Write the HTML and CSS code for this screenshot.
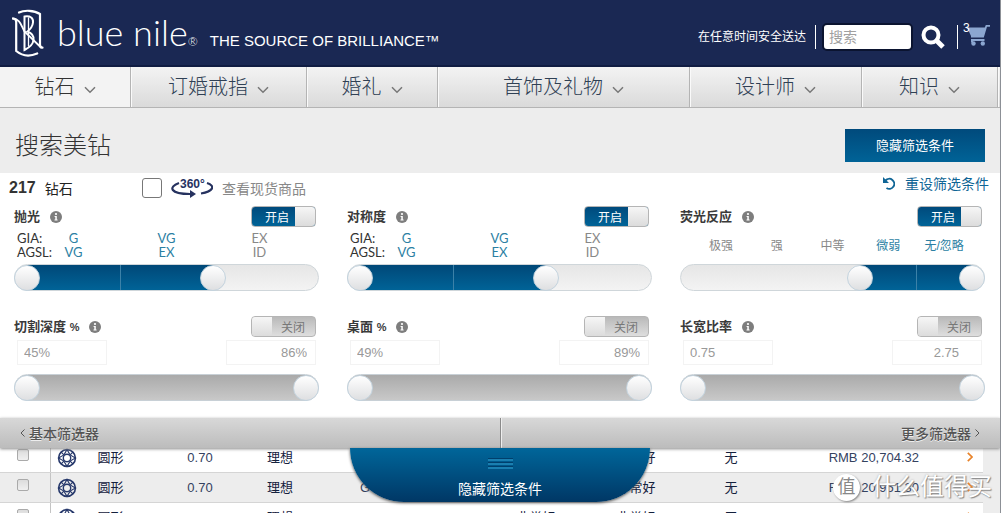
FILE: index.html
```html
<!DOCTYPE html>
<html lang="zh-CN">
<head>
<meta charset="utf-8">
<title>搜索美钻 - Blue Nile</title>
<link rel="stylesheet" href="styles.css">
</head>
<body>
<svg class="defs" aria-hidden="true">
  <symbol id="chev" viewBox="0 0 12 8"><path d="M1 1.2 6 6.2 11 1.2" fill="none" stroke="currentColor" stroke-width="1.5"/></symbol>
  <symbol id="info" viewBox="0 0 12 12"><circle cx="6" cy="6" r="6" fill="#7d7d7d"/><circle cx="6" cy="3" r="1.1" fill="#fff"/><path d="M4.6 5h2.2v3.6h.8v1H4.5v-1h.8V6h-.7z" fill="#fff"/></symbol>
  <symbol id="gem" viewBox="0 0 20 20"><g fill="none" stroke="#26386b" stroke-width="1.100"><circle cx="10" cy="10" r="8.400" stroke-width="1.600"/><circle cx="10" cy="10" r="3.700" stroke-width="1.400"/><path d="M10 1.600 6.900 6.900 1.600 10l5.300 3.100L10 18.400l3.100-5.300L18.400 10l-5.300-3.100z"/><path d="M4 4l2.900 2.900M16 4l-2.900 2.900M4 16l2.900-2.900M16 16l-2.900-2.900"/></g></symbol>
</svg>
<div class="page">
  <header class="header">
    <a class="brand" href="#">
      <svg class="brand-mark" viewBox="0 0 32 48" aria-hidden="true">
        <g fill="none" stroke="#fff" stroke-linecap="round">
          <path d="M7 3.500C12 1 22 1 28 5V35.500c0 2 1 3.200 2.500 3.200" stroke-width="2.200"/>
          <path d="M.8 9.500c2.600 0 3.400 1.500 3.400 4V42c6 5 14 5.500 21 2.500" stroke-width="2.200"/>
          <path d="M.8 9.500C8 10 9 16 12.500 22.500L29 38.500" stroke-width="1.800"/>
          <path d="M12.500 41V7.500c6-1 9 1.500 8.500 6-.4 4-2.500 6.500-5.500 9 4 1.500 6.500 4.500 6 8.500-.4 4-4 7.500-9 10z" stroke-width="2"/>
          <path d="M16.500 9v12M16.500 24v13" stroke-width="1.300"/>
        </g>
      </svg>
      <span class="brand-name">blue nile<small>®</small></span>
      <span class="tagline">THE SOURCE OF BRILLIANCE™</span>
    </a>
    <div class="tools">
      <span class="ship">在任意时间安全送达</span>
      <form class="search">
        <input type="search" aria-label="搜索" placeholder="搜索">
        <button type="button" aria-label="搜索">
          <svg viewBox="0 0 24 24" width="24" height="24"><circle cx="10" cy="10" r="7.500" fill="none" stroke="#fff" stroke-width="4"/><path d="M15.500 15.500 22 22" stroke="#fff" stroke-width="5"/></svg>
        </button>
      </form>
      <a class="cart" href="#" aria-label="购物车">
        <svg viewBox="0 0 24 22" width="24" height="22"><g fill="#8ba6d0"><path d="M1 2.500h17.800L19.800 0H24v1.800h-3l-3.200 10.700H5V11zM5 14h13.500v2H7v1.500H5z"/><circle cx="7.500" cy="18.500" r="2.200"/><circle cx="16.800" cy="18.500" r="2.200"/></g></svg>
        <span class="count">3</span>
      </a>
    </div>
  </header>

  <nav class="nav">
    <a class="active" href="#">钻石<svg><use href="#chev"/></svg></a>
    <a href="#">订婚戒指<svg><use href="#chev"/></svg></a>
    <a href="#">婚礼<svg><use href="#chev"/></svg></a>
    <a href="#">首饰及礼物<svg><use href="#chev"/></svg></a>
    <a href="#">设计师<svg><use href="#chev"/></svg></a>
    <a href="#">知识<svg><use href="#chev"/></svg></a>
  </nav>

  <div class="title-band">
    <h1>搜索美钻</h1>
    <button class="hide-btn" type="button">隐藏筛选条件</button>
  </div>

  <main class="panel">
    <div class="summary">
      <p class="total"><strong>217</strong>钻石</p>
      <label class="stock">
        <input type="checkbox">
        <svg viewBox="0 0 42 22" width="42" height="22" aria-hidden="true">
          <text x="9" y="11">360°</text>
          <path d="M8 6C-3 10-1 17 19 17M30 16.500C42 14.500 45 9 36 6" fill="none" stroke="#26325f" stroke-width="2.200"/>
          <path d="M19 13v8l6-4z" fill="#26325f"/>
        </svg>
        查看现货商品
      </label>
      <a class="reset" href="#">
        <svg viewBox="0 0 12 13" width="12" height="13"><path d="M2.500 3.500A5 5 0 1 1 3.500 11" fill="none" stroke="currentColor" stroke-width="1.900"/><path d="M0 0v6h6z" fill="currentColor"/></svg>
        重设筛选条件
      </a>
    </div>

    <div class="filters">
      <section class="filter">
        <div class="filter-head">
          <h2>抛光</h2><svg class="info"><use href="#info"/></svg>
          <label class="toggle"><input type="checkbox" role="switch" checked aria-label="抛光"><span>开启</span></label>
        </div>
        <div class="filter-body grades">
          <span class="lab">GIA:</span><span class="on">G</span><span class="on">VG</span><span>EX</span>
          <span class="lab">AGSL:</span><span class="on">VG</span><span class="on">EX</span><span>ID</span>
        </div>
        <div class="slider" style="--from:0;--to:2;--steps:3">
          <div class="fill"></div>
          <input type="range" min="0" max="3" value="0" aria-label="抛光下限"><input type="range" min="0" max="3" value="2" aria-label="抛光上限">
        </div>
      </section>

      <section class="filter">
        <div class="filter-head">
          <h2>对称度</h2><svg class="info"><use href="#info"/></svg>
          <label class="toggle"><input type="checkbox" role="switch" checked aria-label="对称度"><span>开启</span></label>
        </div>
        <div class="filter-body grades">
          <span class="lab">GIA:</span><span class="on">G</span><span class="on">VG</span><span>EX</span>
          <span class="lab">AGSL:</span><span class="on">VG</span><span class="on">EX</span><span>ID</span>
        </div>
        <div class="slider" style="--from:0;--to:2;--steps:3">
          <div class="fill"></div>
          <input type="range" min="0" max="3" value="0" aria-label="对称度下限"><input type="range" min="0" max="3" value="2" aria-label="对称度上限">
        </div>
      </section>

      <section class="filter">
        <div class="filter-head">
          <h2>荧光反应</h2><svg class="info"><use href="#info"/></svg>
          <label class="toggle"><input type="checkbox" role="switch" checked aria-label="荧光反应"><span>开启</span></label>
        </div>
        <div class="filter-body levels">
          <span>极强</span><span>强</span><span>中等</span><span class="on">微弱</span><span class="on">无/忽略</span>
        </div>
        <div class="slider" style="--from:3;--to:5;--steps:5">
          <div class="fill"></div>
          <input type="range" min="0" max="5" value="3" aria-label="荧光反应下限"><input type="range" min="0" max="5" value="5" aria-label="荧光反应上限">
        </div>
      </section>

      <section class="filter off">
        <div class="filter-head">
          <h2>切割深度 <small>%</small></h2><svg class="info"><use href="#info"/></svg>
          <label class="toggle"><input type="checkbox" role="switch" aria-label="切割深度"><span>关闭</span></label>
        </div>
        <div class="filter-body bounds">
          <input type="text" value="45%" aria-label="切割深度最小值"><input type="text" value="86%" aria-label="切割深度最大值">
        </div>
        <div class="slider" style="--from:0;--to:1;--steps:1">
          <div class="fill"></div>
          <input type="range" min="45" max="86" value="45" aria-label="切割深度下限"><input type="range" min="45" max="86" value="86" aria-label="切割深度上限">
        </div>
      </section>

      <section class="filter off">
        <div class="filter-head">
          <h2>桌面 <small>%</small></h2><svg class="info"><use href="#info"/></svg>
          <label class="toggle"><input type="checkbox" role="switch" aria-label="桌面"><span>关闭</span></label>
        </div>
        <div class="filter-body bounds">
          <input type="text" value="49%" aria-label="桌面最小值"><input type="text" value="89%" aria-label="桌面最大值">
        </div>
        <div class="slider" style="--from:0;--to:1;--steps:1">
          <div class="fill"></div>
          <input type="range" min="49" max="89" value="49" aria-label="桌面下限"><input type="range" min="49" max="89" value="89" aria-label="桌面上限">
        </div>
      </section>

      <section class="filter off">
        <div class="filter-head">
          <h2>长宽比率</h2><svg class="info"><use href="#info"/></svg>
          <label class="toggle"><input type="checkbox" role="switch" aria-label="长宽比率"><span>关闭</span></label>
        </div>
        <div class="filter-body bounds ratio">
          <input type="text" value="0.75" aria-label="长宽比率最小值"><input type="text" value="2.75" aria-label="长宽比率最大值">
        </div>
        <div class="slider" style="--from:0;--to:1;--steps:1">
          <div class="fill"></div>
          <input type="range" min="75" max="275" value="75" aria-label="长宽比率下限"><input type="range" min="75" max="275" value="275" aria-label="长宽比率上限">
        </div>
      </section>
    </div>
  </main>

  <div class="pager">
    <a href="#"><svg viewBox="0 0 5 8" width="5" height="8"><path d="M4.500.5 1 4l3.500 3.500" fill="none" stroke="currentColor"/></svg>基本筛选器</a>
    <a href="#">更多筛选器<svg viewBox="0 0 5 8" width="5" height="8"><path d="M.5.5 4 4 .5 7.500" fill="none" stroke="currentColor"/></svg></a>
    <button class="drawer" type="button"><span class="grip"></span>隐藏筛选条件</button>
  </div>

  <div class="results">
    <table>
      <colgroup><col class="c-check"><col class="c-shape"><col class="c-carat"><col class="c-cut"><col class="c-color"><col class="c-clarity"><col class="c-grade"><col class="c-grade"><col class="c-fluor"><col class="c-price"><col class="c-go"></colgroup>
      <tbody>
        <tr><td class="pick"><input type="checkbox" aria-label="选择"></td><td class="shape"><div><svg class="gem"><use href="#gem"/></svg>圆形</div></td><td class="num">0.70</td><td>理想</td><td class="num">G</td><td class="num">VS1</td><td>非常好</td><td>非常好</td><td>无</td><td class="price">RMB 20,704.32</td><td class="go"><a href="#" aria-label="查看"><svg viewBox="0 0 6 10" width="6" height="10"><path d="M.8.8 5 5 .8 9.200" fill="none" stroke="#e8832a" stroke-width="1.700"/></svg></a></td></tr>
        <tr><td class="pick"><input type="checkbox" aria-label="选择"></td><td class="shape"><div><svg class="gem"><use href="#gem"/></svg>圆形</div></td><td class="num">0.70</td><td>理想</td><td class="num">G</td><td class="num">VS1</td><td>非常好</td><td>非常好</td><td>无</td><td class="price">RMB 20,951.30</td><td class="go"><a href="#" aria-label="查看"><svg viewBox="0 0 6 10" width="6" height="10"><path d="M.8.8 5 5 .8 9.200" fill="none" stroke="#e8832a" stroke-width="1.700"/></svg></a></td></tr>
        <tr><td class="pick"><input type="checkbox" aria-label="选择"></td><td class="shape"><div><svg class="gem"><use href="#gem"/></svg>圆形</div></td><td class="num">0.70</td><td>理想</td><td class="num">G</td><td class="num">VS1</td><td>非常好</td><td>非常好</td><td>无</td><td class="price">RMB 21,880.88</td><td class="go"><a href="#" aria-label="查看"><svg viewBox="0 0 6 10" width="6" height="10"><path d="M.8.8 5 5 .8 9.200" fill="none" stroke="#e8832a" stroke-width="1.700"/></svg></a></td></tr>
      </tbody>
    </table>
    <div class="watermark"><span class="seal">值</span>什么值得买</div>
  </div>
</div>
</body>
</html>
```

FILE: styles.css
```css
* { box-sizing: border-box; }

body {
  margin: 0;
  font-family: "Liberation Sans", "Noto Sans CJK SC", sans-serif;
  font-size: 13px;
  color: #222;
}

h1, h2, p { margin: 0; }
a { color: inherit; text-decoration: none; }
button, input { font: inherit; }
svg { flex: none; }
.defs { position: absolute; width: 0; height: 0; }

.page {
  display: flex;
  flex-direction: column;
  height: 100vh;
  overflow: hidden;
  border-right: 1px solid #8c9096;
  background: #fff;
}

/* Header */
.header {
  display: flex;
  flex: none;
  justify-content: space-between;
  height: 67px;
  padding: 0 10px 0 12px;
  background: #1a2853;
  border-bottom: 2px solid #101c42;
}
.brand { display: flex; align-items: baseline; height: 60px; color: #fff; }
.brand-mark { align-self: flex-start; width: 32px; height: 48px; margin: 9px 13px 0 0; }
.brand-name { font-family: Lato, sans-serif; font-size: 36px; font-weight: 300; line-height: 64px; white-space: nowrap; }
.brand-name small { font-size: 12px; }
.tagline { margin-left: 12px; font-size: 15px; white-space: nowrap; }
.tools { display: flex; align-items: center; height: 74px; color: #fff; }
.ship { padding-right: 9px; font-size: 12px; line-height: 24px; border-right: 1px solid #fff; white-space: nowrap; }
.search { display: flex; align-items: center; padding: 0 12px 0 6px; gap: 8px; border-right: 1px solid #fff; height: 24px; }
.search input {
  width: 91px;
  height: 28px;
  padding: 0 5px;
  font-size: 14px;
  background: #fff;
  border: 2px solid #0b1430;
  border-radius: 5px;
}
.search input::placeholder { color: #a0a0a0; }
.search button { height: 24px; padding: 0; background: none; border: 0; }
.cart { position: relative; margin-left: 8px; height: 24px; }
.count { position: absolute; left: -3px; top: -4px; font-size: 12px; }

/* Main navigation */
.nav {
  display: grid;
  flex: none;
  grid-template-columns: 131fr 176fr 131fr 252fr 172fr 136fr;
  height: 41px;
  padding-right: 2px;
  background: linear-gradient(#f3f3f3, #dadada);
  border-bottom: 1px solid #b4b4b4;
}
.nav a {
  display: flex;
  align-items: center;
  justify-content: center;
  gap: 9px;
  font-size: 20px;
  font-weight: 300;
  line-height: 38px;
  color: #2f4054;
  border-right: 1px solid #b4b4b4;
  box-shadow: 1px 0 #fafafa;
}
.nav .active { background: #f3f3f3; color: #333; }
.nav svg { width: 12px; height: 8px; margin-top: 6px; color: #777; }

.title-band {
  display: flex;
  flex: none;
  align-items: center;
  justify-content: space-between;
  height: 65px;
  padding: 10px 15px 0 15px;
  background: #ededed;
}
.title-band h1 { padding-bottom: 4px; font-size: 24px; font-weight: 300; color: #333; }
.hide-btn {
  width: 140px;
  height: 33px;
  padding: 0 0 2px;
  font-size: 13px;
  color: #fff;
  background: linear-gradient(#004a7c, #006397);
  border: 0;
}

/* Filter panel */
.panel { flex: none; padding-bottom: 17px; }
.summary { display: flex; height: 32px; padding: 0 11px 2px 9px; }
.total { display: flex; align-items: center; gap: 9px; width: 133px; font-size: 14px; }
.total strong { font-size: 16px; color: #333; }
.stock { display: flex; align-items: center; gap: 9px; font-size: 14px; color: #888; }
.stock input {
  appearance: none;
  width: 20px;
  height: 20px;
  margin: 0;
  background: #fff;
  border: 1px solid #777;
  border-radius: 3px;
}
.stock text { font: bold 12px "Liberation Sans", sans-serif; fill: #26325f; }
.reset { display: flex; align-items: center; gap: 10px; height: 20px; margin-left: auto; font-size: 14px; color: #0f6596; }

.filters { display: grid; grid-template-columns: repeat(3, 1fr); row-gap: 24px; padding-right: 1px; }
.filter { padding: 0 14px; }
.filter-head { display: flex; align-items: center; height: 22px; padding-right: 3px; }
.filter-head h2 { padding-top: 2px; font-size: 13px; font-weight: 700; line-height: 20px; color: #3a3a3a; }
.filter-head small { font-size: 11px; }
.info { width: 12px; height: 12px; margin: 2px 0 0 10px; }

.toggle {
  display: flex;
  align-items: center;
  position: relative;
  width: 65px;
  height: 21px;
  margin-left: auto;
  font-size: 12px;
  color: #fff;
  background: linear-gradient(#004a7c, #006397);
  border: 1px solid #b5b5b5;
  border-radius: 4px;
}
.toggle span { padding-left: 13px; }
.toggle input {
  appearance: none;
  position: absolute;
  top: 0;
  right: 0;
  width: 20px;
  height: 19px;
  margin: 0;
  background: linear-gradient(#f6f6f6, #dcdcdc);
  border-radius: 0 3px 3px 0;
}
.off .toggle { color: #777; background: linear-gradient(#b9b9b9, #dedede); }
.off .toggle span { padding-left: 29px; }
.off .toggle input { left: 0; right: auto; border-radius: 3px 0 0 3px; }

.filter-body { height: 37px; }
.grades, .levels { display: grid; padding: 0 13px; color: #888; }
.grades > *, .levels > * { text-align: center; }
.grades { grid-template-columns: repeat(3, 1fr); padding-top: 4px; align-content: start; font-family: Lato, sans-serif; line-height: 14px; }
.grades span { grid-row: 2; }
.grades span:nth-child(-n+4) { grid-row: 1; }
.grades span:nth-child(4n+2) { grid-column: 1; }
.grades span:nth-child(4n+3) { grid-column: 2; }
.grades span:nth-child(4n) { grid-column: 3; }
.grades .lab { grid-column: 1; justify-self: start; margin-left: -10px; color: #333; }
.levels { grid-template-columns: repeat(5, 1fr); font-size: 12px; line-height: 38px; }
.levels span { white-space: nowrap; }
.filter-body .on { color: #2c7fa3; }

.bounds { display: flex; justify-content: space-between; align-items: flex-start; padding: 3px 3px 0; }
.bounds input { width: 90px; height: 25px; padding: 0 6px; color: #999; background: #fff; border: 1px solid #f3f3f3; }
.bounds input:last-child { padding-right: 8px; text-align: right; }
.ratio input:last-child { padding-right: 22px; }

.slider {
  position: relative;
  height: 27px;
  background: linear-gradient(#e6e6e6, #f3f3f3);
  border: 1px solid #cfd6da;
  border-radius: 14px;
}
.fill {
  --step: calc((100% - 24px) / var(--steps));
  position: absolute;
  top: 0;
  bottom: 0;
  left: calc(12px + var(--step) * var(--from));
  right: calc(100% - 12px - var(--step) * var(--to));
  background: linear-gradient(90deg, transparent 50%, #3c81a8 50%, #3c81a8 calc(50% + 1px), transparent calc(50% + 1px)), linear-gradient(#004878, #006397);
}
.off .slider { background: linear-gradient(#aaa, #c8c8c8); border-color: #c8d0d6; }
.off .fill { background: none; }
.slider input {
  appearance: none;
  position: absolute;
  left: -1px;
  top: -1px;
  width: calc(100% + 2px);
  height: 27px;
  margin: 0;
  background: none;
  pointer-events: none;
}
.slider input::-webkit-slider-thumb {
  appearance: none;
  width: 26px;
  height: 26px;
  background: linear-gradient(#fff, #dedfe1);
  border: 1px solid #c3d3de;
  border-radius: 50%;
  pointer-events: auto;
}

/* Bar that switches between basic and advanced filters */
.pager {
  display: flex;
  flex: none;
  position: relative;
  z-index: 1;
  height: 30px;
  background: linear-gradient(#d8d8d8, #bcbcbc);
  box-shadow: 0 1px 3px #888;
}
.pager a {
  display: flex;
  flex: 1;
  align-items: center;
  gap: 4px;
  padding: 0 20px;
  font-size: 14px;
  font-weight: 500;
  color: #555;
  text-shadow: 0 1px #eee;
}
.pager a + a { justify-content: flex-end; border-left: 1px solid #8a8a8a; box-shadow: inset 1px 0 #eee; }
.drawer {
  display: flex;
  flex-direction: column;
  align-items: center;
  gap: 10px;
  position: absolute;
  top: 100%;
  left: 50%;
  width: 300px;
  height: 54px;
  margin-left: -150px;
  padding: 10px 0 0;
  font-size: 14px;
  line-height: 20px;
  color: #fff;
  background: linear-gradient(#00669a, #003765);
  border: 0;
  border-radius: 0 0 54px 54px;
  box-shadow: 0 1px 3px #555;
}
.grip { width: 25px; height: 11px; background: repeating-linear-gradient(#003f6c 0 1px, #1a7fb0 1px 3px, transparent 3px 4px); }

/* Results */
.results { position: relative; flex: 1; min-height: 0; margin-top: -6px; padding-right: 17px; overflow: hidden; background: #ededed; }
table { width: 100%; table-layout: fixed; border-collapse: collapse; color: #14213d; background: #fff; }
td { height: 30px; padding: 2px 0 0; font-size: 13px; line-height: 20px; text-align: center; border-bottom: 1px solid #d5d5d5; }
tr:nth-child(even) { background: #ededed; }
.c-check { width: 50px; }
.c-shape { width: 110px; }
.c-carat, .c-cut { width: 80px; }
.c-color { width: 90px; }
.c-clarity { width: 76px; }
.c-grade { width: 100px; }
.c-fluor { width: 90px; }
.c-price { width: 159px; }
.c-go { width: 48px; }
.num, .price { color: #34425f; }
td.pick { text-align: left; border-right: 1px solid #c4c4c4; }
.pick input {
  appearance: none;
  display: block;
  width: 12px;
  height: 12px;
  margin: 0 0 6px 17px;
  background: linear-gradient(#dcdcdc, #f0f0f0);
  border: 1px solid #aaa;
  border-radius: 2px;
}
.shape div { display: flex; align-items: center; gap: 21px; padding-left: 6px; }
.gem { width: 20px; height: 20px; }
td.price { padding-right: 16px; text-align: right; }
td.go { padding-right: 10px; text-align: right; }

.watermark {
  display: flex;
  align-items: center;
  gap: 12px;
  position: absolute;
  right: 8px;
  top: 30px;
  font-size: 24px;
  line-height: 30px;
  color: #fff;
  text-shadow: 1px 1px 1px #888, 0 0 2px #aaa;
  pointer-events: none;
}
.seal {
  width: 27px;
  height: 27px;
  font-size: 18px;
  line-height: 26px;
  text-align: center;
  color: #888;
  text-shadow: none;
  background: #fff;
  border-radius: 50%;
  box-shadow: 1px 1px 2px #888;
}
```
